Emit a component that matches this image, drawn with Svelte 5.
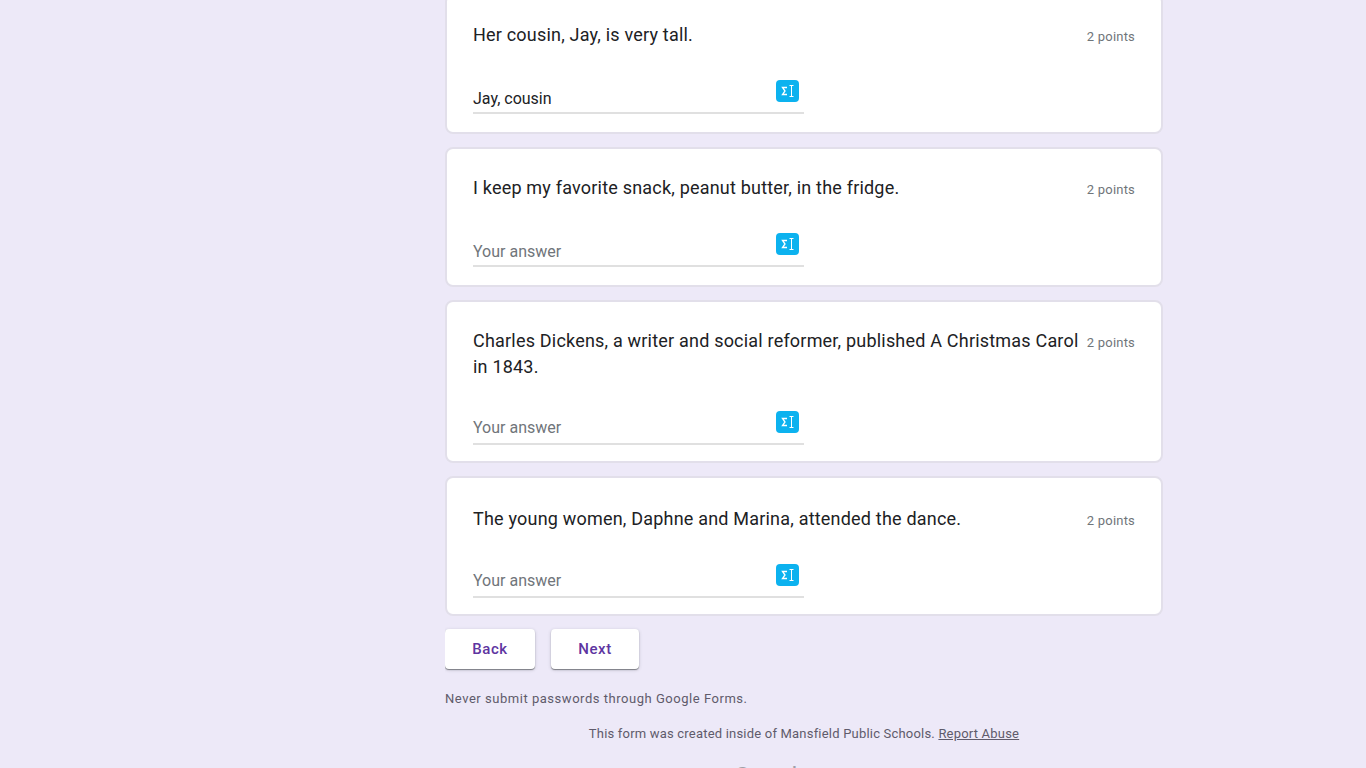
<script>
    const questions = [
        { text: 'Her cousin, Jay, is very tall.', answer: 'Jay, cousin' },
        { text: 'I keep my favorite snack, peanut butter, in the fridge.', answer: '' },
        { text: 'Charles Dickens, a writer and social reformer, published A Christmas Carol in 1843.', answer: '' },
        { text: 'The young women, Daphne and Marina, attended the dance.', answer: '' }
    ]
</script>

<main class="page">
    {#each questions as q}
        <section class="card">
            <div class="head">
                <div class="question">{q.text}</div>
                <div class="points">2 points</div>
            </div>
            <div class="field">
                <span class="answer" class:empty={!q.answer}>{q.answer || 'Your answer'}</span>
                <span class="badge">
                    <svg width="14" height="14" viewBox="0 0 14 14" fill="none">
                        <path d="M6 3.500H1.500L4 7 1.500 10.500H6" stroke="#fff" stroke-width="1.300"/>
                        <path d="M8.500 1.500h4M8.500 12.500h4M10.500 1.500v11" stroke="#fff" stroke-width="1"/>
                    </svg>
                </span>
            </div>
        </section>
    {/each}

    <div class="buttons">
        <button class="back">Back</button>
        <button class="next">Next</button>
    </div>

    <p class="warning">Never submit passwords through Google Forms.</p>
    <p class="footer">This form was created inside of Mansfield Public Schools. <u>Report Abuse</u></p>
    <div class="brand"><span class="google">Google</span> <span class="forms">Forms</span></div>
</main>

<style>
    :global(body) {
        background: #ede9f8;
        overflow: hidden;
        font-family: Roboto, sans-serif;
    }

    .page {
        width: 718px;
        margin: -6px 0 0 445px;
        height: 774px;
        overflow: hidden;
    }

    .card {
        box-sizing: border-box;
        background: #fff;
        border: 2px solid #e2dfea;
        border-radius: 8px;
        padding: 26px 26px 18px 26px;
        margin-bottom: 13px;
    }

    .card:nth-of-type(3),
    .card:nth-of-type(4) {
        padding-bottom: 16px;
    }

    .card:nth-of-type(3) .field {
        margin-top: 30px;
        padding-top: 6px;
    }

    .card:nth-of-type(4) .head {
        margin-top: 2px;
    }

    .card:nth-of-type(4) .field {
        padding-top: 6px;
    }

    .head {
        display: flex;
        justify-content: space-between;
        gap: 6px;
        min-height: 29px;
    }

    .question {
        font-size: 18px;
        line-height: 26px;
        color: #202124;
        letter-spacing: 0.2px;
    }

    .points {
        flex: none;
        font-size: 13px;
        line-height: 16px;
        margin-top: 7px;
        color: #70757a;
        letter-spacing: 0.2px;
    }

    .field {
        position: relative;
        width: 331px;
        height: 35px;
        margin-top: 28px;
        border-bottom: 2px solid #e0e0e0;
        box-sizing: border-box;
        padding-top: 8px;
    }

    .answer {
        font-size: 16px;
        line-height: 24px;
        color: #202124;
    }

    .answer.empty {
        color: #70757a;
    }

    .badge {
        position: absolute;
        right: 5px;
        top: 1px;
        width: 23px;
        height: 22px;
        border-radius: 4px;
        background: #0cb2ef;
        display: flex;
        align-items: center;
        justify-content: center;
    }

    .buttons {
        display: flex;
        gap: 16px;
    }

    button {
        height: 40px;
        border: none;
        border-radius: 4px;
        background: #fff;
        color: #5e35a1;
        font-family: Roboto, sans-serif;
        font-size: 15px;
        font-weight: 500;
        letter-spacing: 0.6px;
        box-shadow: 0 1px 1px rgba(60, 64, 67, 0.6), 0 1px 3px 1px rgba(60, 64, 67, 0.12);
    }

    .back { width: 90px; }
    .next { width: 88px; }

    .warning {
        margin: 21px 0 0;
        font-size: 13px;
        line-height: 18px;
        letter-spacing: 0.53px;
        color: #5f5b6b;
    }

    .footer {
        margin: 17px 0 0;
        text-align: center;
        font-size: 13px;
        line-height: 18px;
        letter-spacing: 0.2px;
        color: #5f5b6b;
    }

    .brand {
        margin-top: 19px;
        text-align: center;
        line-height: 28px;
        color: #a0a0a8;
    }

    .google {
        font-size: 24px;
    }

    .forms {
        font-size: 21px;
    }
</style>
